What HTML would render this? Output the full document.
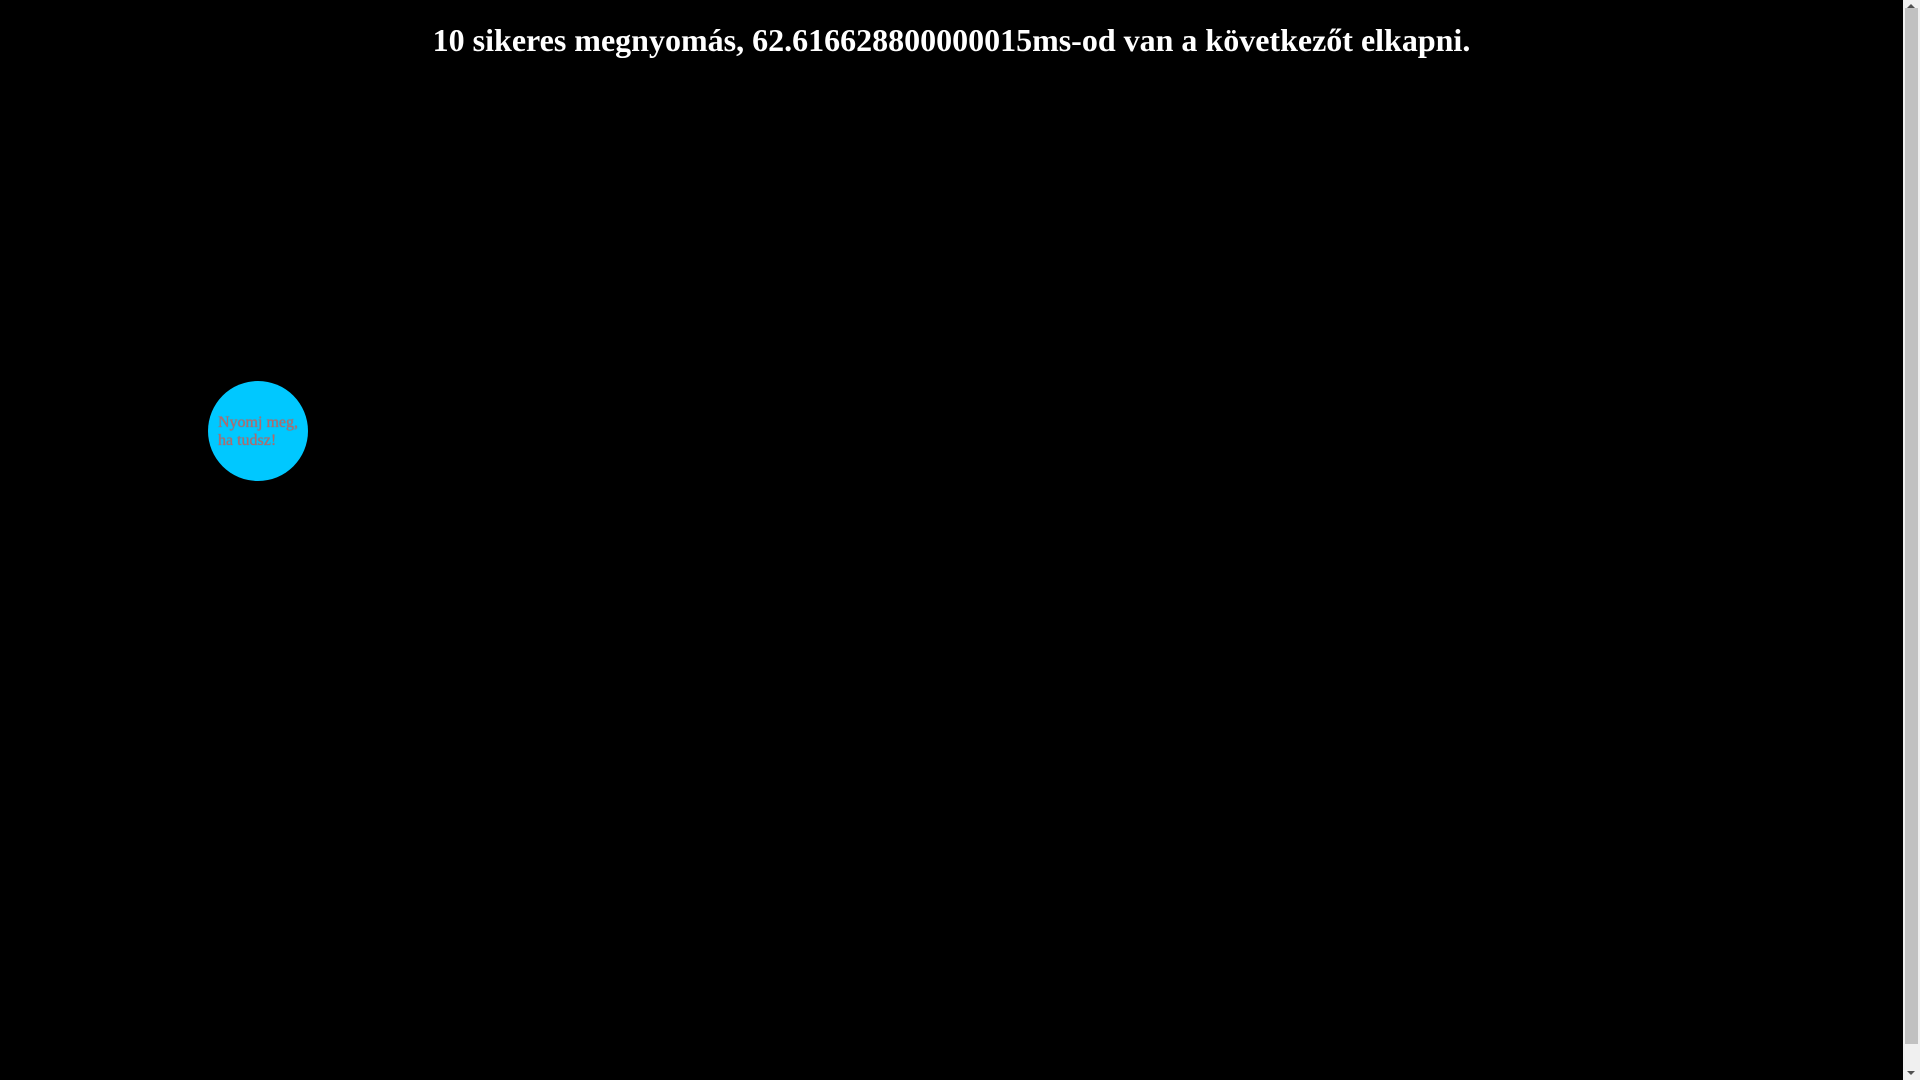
<!DOCTYPE html>
<html><head><meta charset="utf-8"><style>
html,body{margin:0;padding:0;background:#000;width:1920px;height:1080px;overflow:hidden;}
h1{margin:0;position:absolute;left:0;width:1903px;top:22px;text-align:center;color:#fff;font:bold 32px/37px "Liberation Serif",serif;}
.c{position:absolute;left:208px;top:381px;width:100px;height:100px;border-radius:50%;background:#00c8ff;}
.t{position:absolute;left:10px;top:33px;font:16px/18px "Liberation Serif",serif;color:#b9686a;text-shadow:0 0 1px #777;}
.sb{position:absolute;right:0;top:0;width:17px;height:1080px;background:#f0f0f0;}
.th{position:absolute;left:2px;top:8px;width:13px;height:1036px;background:#c1c1c1;}
</style></head><body>
<h1>10 sikeres megnyomás, 62.616628800000015ms-od van a következőt elkapni.</h1>
<div class="c"><div class="t">Nyomj meg,<br>ha tudsz!</div></div>
<div class="sb"><div class="th"></div>
<div style="position:absolute;left:4px;top:4px;width:0;height:0;border-left:4px solid transparent;border-right:4px solid transparent;border-bottom:4px solid #505050"></div>
<div style="position:absolute;left:4px;top:1071px;width:0;height:0;border-left:4px solid transparent;border-right:4px solid transparent;border-top:4px solid #505050"></div>
</div>
</body></html>
